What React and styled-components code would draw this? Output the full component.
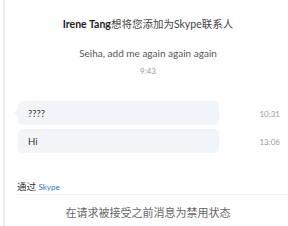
import React from 'react';
import styled, { createGlobalStyle } from 'styled-components';

const GlobalStyle = createGlobalStyle`
  html, body {
    margin: 0;
    padding: 0;
    background: #ffffff;
  }
  body {
    font-family: Lato, "Noto Sans CJK SC", sans-serif;
  }
`;

const messages = [
  { id: 1, text: '????', time: '10:31', tail: true },
  { id: 2, text: 'Hi', time: '13:06' },
];

const App = () => {
  return (
    <>
      <GlobalStyle />
      <Wrapper>
        <Header>
          <Title><b>Irene Tang</b>想将您添加为Skype联系人</Title>
          <Request>Seiha, add me again again again</Request>
          <Stamp>9:43</Stamp>
        </Header>
        <List>
          {messages.map((m) => (
            <Row key={m.id}>
              <Bubble $tail={m.tail}>{m.text}</Bubble>
              <Time>{m.time}</Time>
            </Row>
          ))}
        </List>
        <Via>通过 <Brand>Skype</Brand></Via>
        <Notice>在请求被接受之前消息为禁用状态</Notice>
      </Wrapper>
    </>
  );
};

export default App;

const Wrapper = styled.div`
  width: 288px;
  height: 226px;
  box-sizing: border-box;
  margin-left: 3px;
  border-left: 2px solid #e9eef5;
  display: flex;
  flex-direction: column;
  overflow: hidden;
`;

const Header = styled.div`
  display: flex;
  flex-direction: column;
  align-items: center;
  padding-top: 17px;
`;

const Title = styled.div`
  font-size: 10.5px;
  line-height: 14px;
  color: #444;
  b {
    font-weight: 700;
    color: #222;
  }
`;

const Request = styled.div`
  margin-top: 15px;
  font-size: 10px;
  line-height: 14px;
  color: #555;
`;

const Stamp = styled.div`
  margin-top: 6px;
  font-size: 8px;
  line-height: 10px;
  color: #999;
`;

const List = styled.div`
  margin-top: 25px;
  display: flex;
  flex-direction: column;
  gap: 4px;
  padding-left: 13px;
  padding-right: 11px;
`;

const Row = styled.div`
  display: flex;
  align-items: center;
  justify-content: space-between;
`;

const Bubble = styled.div`
  position: relative;
  width: 201px;
  height: 24px;
  box-sizing: border-box;
  padding-left: 10px;
  display: flex;
  align-items: center;
  background: #f1f4f8;
  border-radius: 5px;
  font-size: 9.5px;
  color: #333;

  &::before {
    content: '';
    display: ${(p) => (p.$tail ? 'block' : 'none')};
    position: absolute;
    left: -4px;
    top: 8px;
    border-top: 4px solid transparent;
    border-bottom: 4px solid transparent;
    border-right: 4px solid #f1f4f8;
  }
`;

const Time = styled.div`
  font-size: 8px;
  color: #999;
  padding-top: 2px;
`;

const Via = styled.div`
  margin-top: 27px;
  margin-left: 12px;
  font-size: 9.5px;
  line-height: 14px;
  color: #333;
  border-bottom: 1px solid #eceff3;
`;

const Brand = styled.span`
  font-size: 8px;
  color: #2a7bc0;
`;

const Notice = styled.div`
  margin-top: 11px;
  text-align: center;
  font-size: 11px;
  line-height: 14px;
  color: #666;
`;
